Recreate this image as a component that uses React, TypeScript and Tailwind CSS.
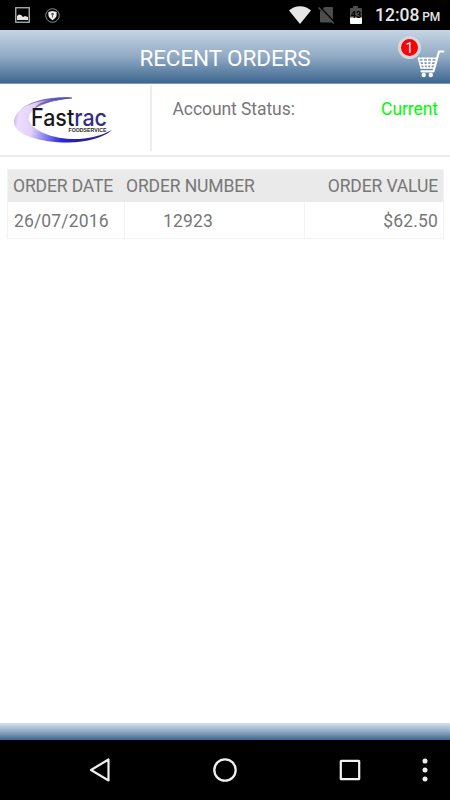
interface Order {
    date: string;
    number: string;
    value: string;
}

const orders: Order[] = [{ date: '26/07/2016', number: '12923', value: '$62.50' }];

function StatusBar() {
    return (
        <div className="flex h-[30px] items-center bg-black pr-[10px] pl-[15px] text-[#e6e6e6]">
            <svg width="15" height="16" viewBox="0 0 15 16">
                <rect x="0.75" y="0.75" width="13.5" height="14.5" fill="none" stroke="#b4b4b4" strokeWidth="1.3" />
                <path d="M2 13V9l2-1.5L6 8l2 2 2-1 3 1v3z" fill="#e6e6e6" />
            </svg>
            <svg className="ml-[15px]" width="15" height="15" viewBox="0 0 15 15">
                <circle cx="7.5" cy="7.5" r="6.8" fill="none" stroke="#8a8a8a" strokeWidth="1" />
                <path d="M7.5 3 11.6 4.1v3c0 2.2-1.7 3.7-4.1 5.1-2.4-1.4-4.1-2.9-4.1-5.1v-3z" fill="#f0f0f0" />
                <path d="M6.2 6a1.3 1.3 0 1 1 1.8 1.2V9.5H7V7.2A1.3 1.3 0 0 1 6.2 6z" fill="#555" />
            </svg>
            <div className="flex-1" />
            <svg width="22" height="18" viewBox="0 0 22 18">
                <path d="M0 4.5C3 1.8 7 .3 11 .3s8 1.5 11 4.2L11 18z" fill="#e6e6e6" />
            </svg>
            <svg className="ml-[7px]" width="17" height="18" viewBox="0 0 17 18">
                <path d="M6.5 1H14q1 0 1 1v13.5q0 1-1 1H3q-1 0-1-1V5.5z" fill="#4d4d4d" />
                <path d="M1.5 0.5 17 16.5" stroke="#000" strokeWidth="1.5" />
                <path d="M0.5 1.5 15.8 17.5" stroke="#4d4d4d" strokeWidth="1.5" />
            </svg>
            <svg className="ml-[14px]" width="14" height="19" viewBox="0 0 14 19">
                <path d="M4 0h5v2h3q1 0 1 1v9H1V3q0-1 1-1h2z" fill="#4d4d4d" />
                <path d="M1 11.5h12V17q0 1-1 1H2q-1 0-1-1z" fill="#fff" />
                <text x="7" y="12" fontSize="9" fontWeight="700" textAnchor="middle" fill="#000">
                    43
                </text>
            </svg>
            <div className="ml-[12px] flex w-[65px] items-baseline justify-between pt-[2px] leading-none font-medium">
                <span className="text-[17.5px]">12:08</span>
                <span className="text-[12px] tracking-[-0.2px]">PM</span>
            </div>
        </div>
    );
}

function CartButton() {
    return (
        <div className="absolute top-[8px] right-[5px] h-[40px] w-[48px]">
            <svg width="48" height="40" viewBox="0 0 48 40">
                <g fill="none" stroke="#fff" strokeLinecap="round" strokeLinejoin="round">
                    <path d="M46.3 13.5H42L36.5 33.3H24.5" strokeWidth="2.2" />
                    <path d="M21.5 20.3H39.5M22.5 23.5H38.5M23.2 26.7H37.8M24 30H37" strokeWidth="1.5" />
                    <path d="M21.5 20.3 24.2 30M26 20.3l1.4 9.7M30.5 20.3V30M35 20.3 33.6 30" strokeWidth="1.6" />
                </g>
                <circle cx="26.7" cy="37" r="2.2" fill="#fff" />
                <circle cx="33.8" cy="37" r="2.2" fill="#fff" />
            </svg>
            <span className="absolute top-[-2px] left-[1px] flex h-[23px] w-[23px] items-center justify-center rounded-full border-[3px] border-[#d5d8db] bg-[#fb0006] pt-px text-[14px] leading-none text-white">
                1
            </span>
        </div>
    );
}

function Logo() {
    return (
        <svg width="106" height="50" viewBox="0 0 106 50">
            <defs>
                <linearGradient id="swoosh" gradientUnits="userSpaceOnUse" x1="2" x2="101" y1="20" y2="34">
                    <stop offset="0" stopColor="#c4abe8" />
                    <stop offset="0.06" stopColor="#eddcfb" />
                    <stop offset="0.2" stopColor="#e2d2fa" />
                    <stop offset="0.34" stopColor="#8d85ee" />
                    <stop offset="0.52" stopColor="#2a25dc" />
                    <stop offset="0.7" stopColor="#251f9e" />
                    <stop offset="1" stopColor="#2f2aa8" />
                </linearGradient>
                <linearGradient id="swoosh-edge" x1="0" x2="1" y1="0" y2="0">
                    <stop offset="0" stopColor="#c4a8e6" />
                    <stop offset="0.4" stopColor="#7d6aa8" />
                    <stop offset="1" stopColor="#3b48d0" />
                </linearGradient>
            </defs>
            <path
                d="M61 3C31 1 3 12 3 27c0 13 26 20.500 54 20.500 19 0 36-5 44-12.500C89 41.500 75 44.500 60 44 38 43 18 34 18 23 18 12 43 4.500 61 3z"
                fill="url(#swoosh)"
            />
            <path d="M7 17C17 6 39 1 61 2.500v1C46 5 31 7 22 15c4-6 11-9 18-10.500C27 6 14 10 7 17z" fill="url(#swoosh-edge)" />
            <text
                x="20"
                y="30.5"
                textLength="76"
                lengthAdjust="spacingAndGlyphs"
                fontFamily="Inter, sans-serif"
                fontSize="24"
                fontWeight="500"
                fill="#17171d"
            >
                Fast<tspan fill="#332c86">rac</tspan>
            </text>
            <text
                x="57.5"
                y="36.5"
                textLength="38"
                lengthAdjust="spacingAndGlyphs"
                fontFamily="Liberation Sans, sans-serif"
                fontSize="5.4"
                fontWeight="700"
                fill="#29292d"
            >
                FOODSERVICE
            </text>
        </svg>
    );
}

function OrdersTable() {
    return (
        <div className="mx-[7px] mt-[12px] w-[437px] border border-[#f3f3f3] text-[#777]">
            <div className="grid h-[32px] grid-cols-[117px_180px_1fr] items-center bg-[#eaeaea] pt-px text-[17.5px] tracking-[-0.12px] whitespace-nowrap">
                <span className="pl-[5px]">ORDER DATE</span>
                <span className="pl-px">ORDER NUMBER</span>
                <span className="pr-[5px] text-right">ORDER VALUE</span>
            </div>
            {orders.map((order) => (
                <div key={order.number} className="grid h-[36px] grid-cols-[117px_180px_1fr] text-[17.5px] tracking-[0.15px]">
                    <span className="flex items-center border-r border-[#f3f3f3] pt-[2px] pl-[6px]">{order.date}</span>
                    <span className="flex items-center border-r border-[#f3f3f3] pt-[2px] pl-[38px]">{order.number}</span>
                    <span className="flex items-center justify-end pt-[2px] pr-[5px]">{order.value}</span>
                </div>
            ))}
        </div>
    );
}

function NavBar() {
    return (
        <div className="flex h-[60px] items-center bg-black pl-[89px]">
            <svg width="22" height="26" viewBox="0 0 22 26">
                <path d="M19.5 2.5v21L2 13z" fill="none" stroke="#eee" strokeWidth="2.2" strokeLinejoin="round" />
            </svg>
            <svg className="ml-[101px]" width="26" height="26" viewBox="0 0 26 26">
                <circle cx="13" cy="13" r="10.7" fill="none" stroke="#eee" strokeWidth="2.3" />
            </svg>
            <svg className="ml-[100px]" width="24" height="24" viewBox="0 0 24 24">
                <rect x="2.8" y="2.8" width="18.4" height="18.4" rx="0.5" fill="none" stroke="#f4f4f4" strokeWidth="2.2" />
            </svg>
            <svg className="ml-[60px]" width="6" height="26" viewBox="0 0 6 26">
                <circle cx="3" cy="4" r="2.5" fill="#eee" />
                <circle cx="3" cy="13" r="2.5" fill="#eee" />
                <circle cx="3" cy="22" r="2.5" fill="#eee" />
            </svg>
        </div>
    );
}

export default function App() {
    return (
        <div className="flex h-[800px] w-[450px] flex-col overflow-hidden bg-white font-['Roboto',sans-serif]">
            <StatusBar />
            <header className="relative flex h-[54px] items-center justify-center border-b border-[#7b9aba] bg-linear-to-b from-[#c6d5e5] via-[#91aac4] to-[#3e678f]">
                <h1 className="pt-[3px] text-[22.5px] leading-none tracking-[-0.1px] text-white">RECENT ORDERS</h1>
                <CartButton />
            </header>
            <section className="flex h-[73px] border-b-2 border-[#ededed]">
                <div className="mt-[1px] h-[66px] w-[152px] border-r-2 border-[#ededed] pt-[10px] pl-[11px]">
                    <Logo />
                </div>
                <div className="flex flex-1 justify-between pt-[14px] pr-[12px] pl-[20.5px] text-[17.5px] leading-[22px] tracking-[-0.07px]">
                    <span className="text-[#777]">Account Status:</span>
                    <span className="text-[#00fb00]">Current</span>
                </div>
            </section>
            <main className="flex-1">
                <OrdersTable />
            </main>
            <div className="h-[17px] bg-linear-to-b from-[#d5e2f0] via-[#91aac4] to-[#3e678f]" />
            <NavBar />
        </div>
    );
}
